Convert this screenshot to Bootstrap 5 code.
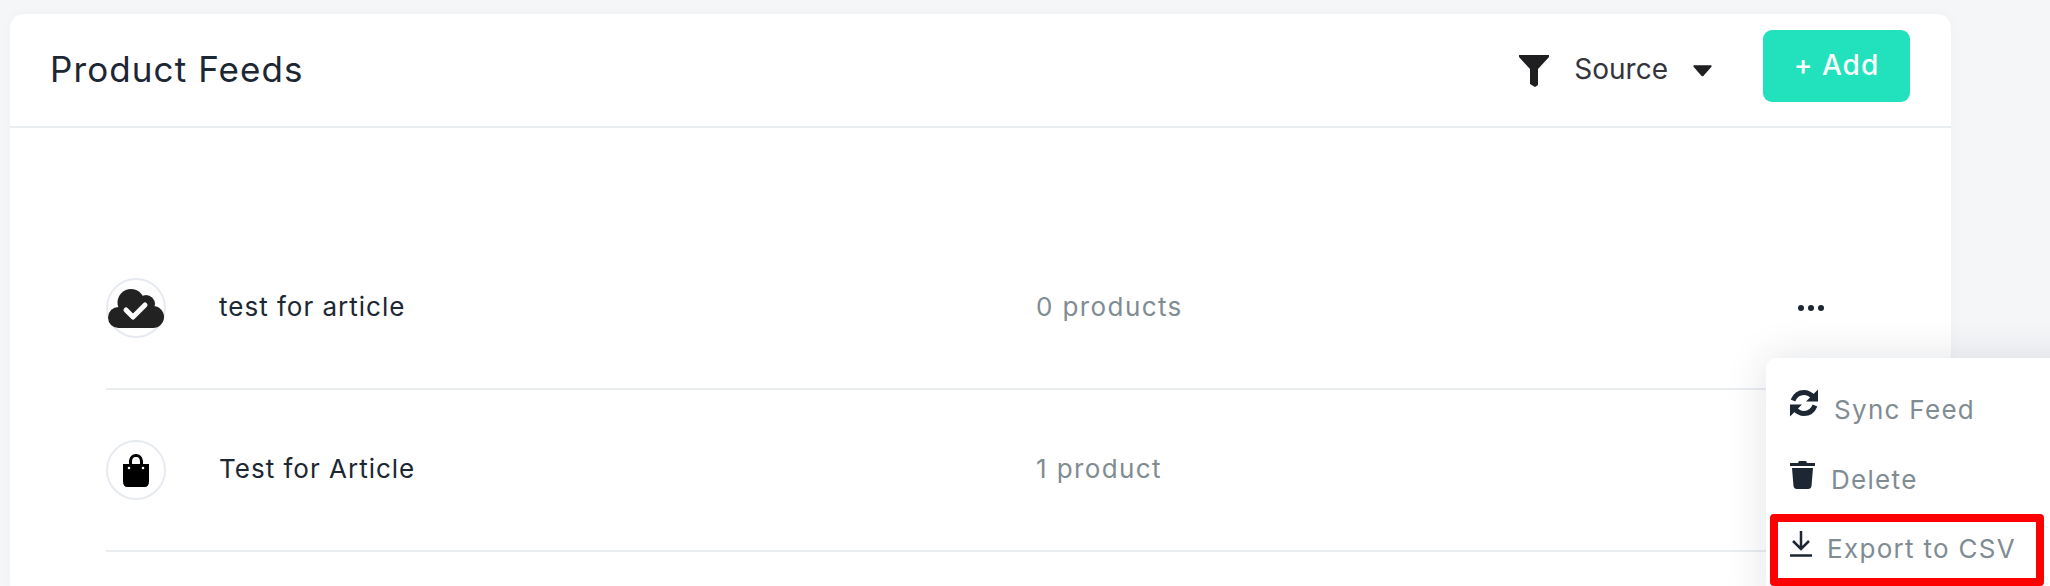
<!DOCTYPE html>
<html>
<head>
<title>Product Feeds</title>
<link href="https://cdn.jsdelivr.net/npm/bootstrap@5.3.2/dist/css/bootstrap.min.css" rel="stylesheet">
<script src="https://cdn.jsdelivr.net/npm/bootstrap@5.3.2/dist/js/bootstrap.bundle.min.js"></script>
<style>
  html, body { height: 586px; overflow: hidden; }
  body { background: #f5f6f8; font-family: "Inter", "Liberation Sans", sans-serif; color: #1c2733; padding: 14px 99px 0 10px; position: relative; }
  .feeds-card { border: 0; border-radius: 14px 14px 0 0; height: 572px; overflow: hidden; box-shadow: 0 0 12px rgba(30,40,60,.03); }
  .feeds-head { flex: none; height: 114px; padding: 0 41px 0 40px; border-bottom: 2px solid #e9edf0; }
  .feeds-title { font-size: 35px; font-weight: 400; margin: 0 0 2px; letter-spacing: 1.1px; }
  .source-filter { font-size: 28px; color: #33343c; margin-right: 51px; margin-top: -3px; }
  .source-filter svg { margin-top: 5px; }
  .source-filter span { margin: 0 25px 0 24px; }
  .add-btn { width: 147px; height: 72px; background: #22e2bd; color: #fff; border: 0; border-radius: 9px; font-size: 28px; font-weight: 500; letter-spacing: 1px; padding: 0 0 3px; margin-top: -8px; }
  .feeds-list { padding: 150px 0 0 96px; }
  .feed-row { margin-bottom: 50px; border-bottom: 2px solid #e9edf0; width: 1740px; padding-bottom: 50px; box-sizing: content-box; height: 60px; }
  .feed-icon { width: 60px; height: 60px; border: 2px solid #e7ebf1; border-radius: 50%; flex: none; }
  .feed-name { width: 817px; margin: 0 0 4px 53px; font-size: 26px; letter-spacing: 1px; }
  .feed-count { font-size: 26px; color: #7f8c92; letter-spacing: 1.4px; margin-bottom: 4px; }
  .feed-more { position: absolute; left: 1797px; top: 304px; }
  .row-menu.dropdown-menu { left: 1766px; top: 358px; width: 330px; height: 260px; border: 0; border-radius: 10px; padding: 0; box-shadow: 0 0 40px rgba(30,40,60,.13); }
  .row-menu .dropdown-item { display: flex; color: #7f8c92; font-size: 26px; letter-spacing: 1.3px; padding: 0 0 0 24px; height: 30px; line-height: 30px; background: none; }
  .row-menu .dropdown-item svg { flex: none; }
  .menu-sync { margin-top: 37px; }
  .menu-sync svg { margin-top: -6px; }
  .menu-delete { margin-top: 40px; }
  .menu-delete svg { margin-top: -5px; }
  .export-box { margin: 19px 0 0 4px; width: 274px; height: 72px; border: 8px solid #fe0000; border-radius: 4px; }
  .row-menu .export-box .dropdown-item { padding-left: 12px; margin-top: 12px; }
  .export-box svg { margin-top: -3px; margin-right: 15px; }
</style>
</head>
<body>
  <div class="card feeds-card">
    <div class="feeds-head d-flex align-items-center">
      <h1 class="feeds-title flex-grow-1">Product Feeds</h1>
      <div class="source-filter d-flex align-items-center">
        <svg width="32" height="32" viewBox="0 0 30 32"><path fill="#1f1f21" d="M0 0H30V2L19 14V30L16 32 11 29V14L0 2Z"/></svg>
        <span>Source</span>
        <svg width="19" height="12" viewBox="0 0 18 11"><path fill="#1f1f21" d="M1 0H17Q18 0 17.500 1.500L10 10Q9 11 8 10L.5 1.500Q0 0 1 0Z"/></svg>
      </div>
      <button type="button" class="btn add-btn">+ Add</button>
    </div>
    <div class="feeds-list">
      <div class="feed-row d-flex align-items-center">
        <div class="feed-icon d-flex align-items-center justify-content-center">
          <svg width="56" height="39" viewBox="0 0 56 39">
            <g fill="#222"><circle cx="23" cy="13.500" r="13.500"/><circle cx="38" cy="15" r="9"/><circle cx="45" cy="28" r="11"/><circle cx="10.500" cy="28.500" r="10.500"/><rect x="10" y="18" width="36" height="21"/></g>
            <path fill="none" stroke="#fff" stroke-width="5" stroke-linecap="round" stroke-linejoin="round" d="M18 21 25 28 37 16"/>
          </svg>
        </div>
        <div class="feed-name">test for article</div>
        <div class="feed-count">0 products</div>
      </div>
      <div class="feed-row d-flex align-items-center">
        <div class="feed-icon d-flex align-items-center justify-content-center">
          <svg width="28" height="33" viewBox="0 0 28 33"><path fill="#000" d="M7 10V8C7 3 10 0 14 0 18 0 21 3 21 8V10H27V28C27 31 25 33 23 33H5C3 33 1 31 1 28V10ZM10 10H18V8C18 5 17 3 14 3 11 3 10 5 10 8Z"/><circle cx="7" cy="14" r="1.300" fill="#fff"/><circle cx="21" cy="14" r="1.300" fill="#fff"/></svg>
        </div>
        <div class="feed-name">Test for Article</div>
        <div class="feed-count">1 product</div>
      </div>
    </div>
  </div>

  <svg class="feed-more" width="28" height="8" viewBox="0 0 28 8"><circle cx="4" cy="4" r="3" fill="#1c2733"/><circle cx="14" cy="4" r="3" fill="#1c2733"/><circle cx="24" cy="4" r="3" fill="#1c2733"/></svg>

  <div class="dropdown-menu show row-menu">
    <a class="dropdown-item menu-sync" href="#">
      <svg width="28" height="28" viewBox="0 0 28 27" class="me-3"><path fill="none" stroke="#1c2733" stroke-width="5" d="M3 11C5 6 9 3 14 3 18 3 21 5 24 8M25 16C23 21 19 24 14 24 10 24 7 22 4 19"/><path fill="#1c2733" d="M28 0V12H16ZM0 27V15H12Z"/></svg>
      <span>Sync Feed</span>
    </a>
    <a class="dropdown-item menu-delete" href="#">
      <svg width="25" height="29" viewBox="0 0 25 29" class="me-3"><path fill="#1c2733" d="M0 3H8L9 1H16L17 3H25V6H0ZM2 8H23L21.500 26C21.300 28 20 29 18 29H7C5 29 3.700 28 3.500 26Z"/></svg>
      <span>Delete</span>
    </a>
    <div class="export-box">
      <a class="dropdown-item" href="#">
        <svg width="22" height="26" viewBox="0 0 22 26"><path fill="none" stroke="#1c2733" stroke-width="2.500" d="M11 0V17M3 10 11 18 19 10M0 24.500H22"/></svg>
        <span>Export to CSV</span>
      </a>
    </div>
  </div>
</body>
</html>
